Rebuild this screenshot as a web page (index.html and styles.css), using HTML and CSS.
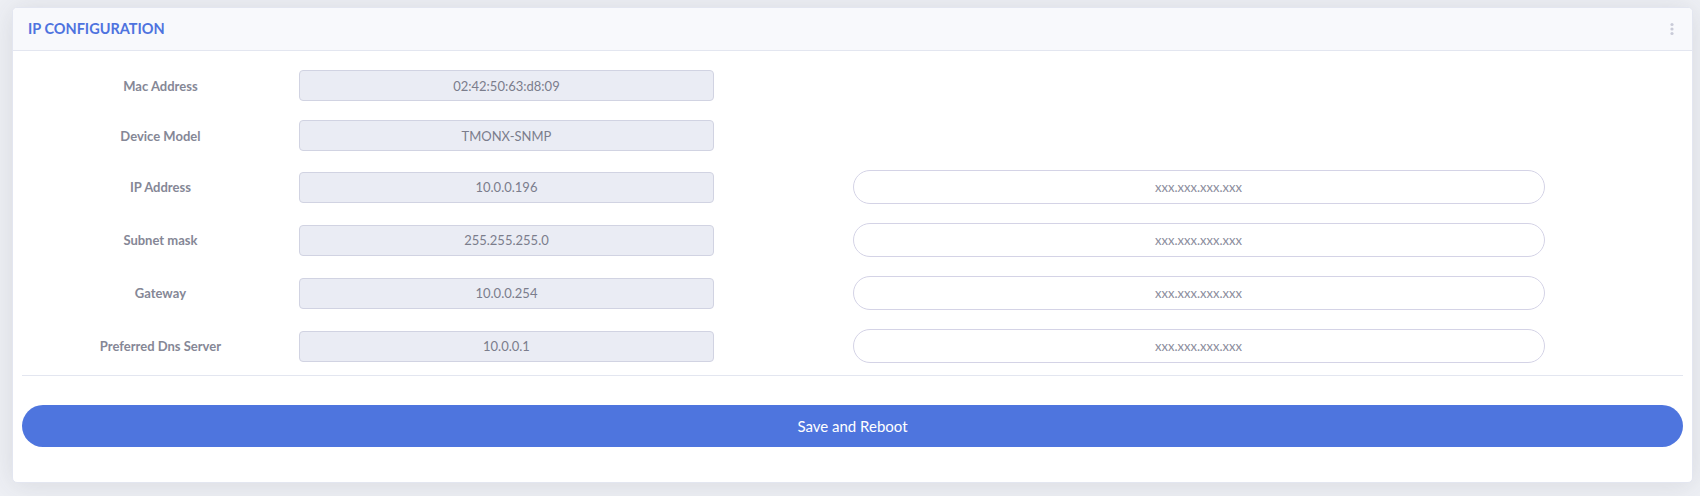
FILE: index.html
```html
<html>
    <head>
        <link rel="stylesheet" href="styles.css">
    </head>
    <body>
        <div class="card">
            <div class="card-header">
                <h6 class="card-title">IP CONFIGURATION</h6>
                <span class="kebab">
                    <svg width="6" height="14" viewBox="0 0 6 14">
                        <circle cx="3" cy="2.5" r="1.6" fill="#c9cbd8"></circle>
                        <circle cx="3" cy="7" r="1.6" fill="#c9cbd8"></circle>
                        <circle cx="3" cy="11.5" r="1.6" fill="#c9cbd8"></circle>
                    </svg>
                </span>
            </div>
            <div class="card-body">
                <form class="ip-form" onsubmit="return false">
                    <label class="field-label">Mac Address</label>
                    <input class="field-current" readonly value="02:42:50:63:d8:09">
                    <span></span><span></span><span></span>

                    <label class="field-label">Device Model</label>
                    <input class="field-current" readonly value="TMONX-SNMP">
                    <span></span><span></span><span></span>

                    <label class="field-label">IP Address</label>
                    <input class="field-current" readonly value="10.0.0.196">
                    <span></span>
                    <input class="field-new" id="new-ip" placeholder="xxx.xxx.xxx.xxx">
                    <span></span>

                    <label class="field-label">Subnet mask</label>
                    <input class="field-current" readonly value="255.255.255.0">
                    <span></span>
                    <input class="field-new" id="new-mask" placeholder="xxx.xxx.xxx.xxx">
                    <span></span>

                    <label class="field-label">Gateway</label>
                    <input class="field-current" readonly value="10.0.0.254">
                    <span></span>
                    <input class="field-new" id="new-gateway" placeholder="xxx.xxx.xxx.xxx">
                    <span></span>

                    <label class="field-label">Preferred Dns Server</label>
                    <input class="field-current" readonly value="10.0.0.1">
                    <span></span>
                    <input class="field-new" id="new-dns" placeholder="xxx.xxx.xxx.xxx">
                    <span></span>
                </form>
                <hr class="divider">
                <button class="btn-save">Save and Reboot</button>
            </div>
        </div>
    </body>
</html>
```

FILE: styles.css
```css
body {
    margin: 0;
    padding: 7px 7px 0 12px;
    background-color: #eef0f5;
    font-family: Lato, "Open Sans", sans-serif;
}

.card {
    background-color: #fff;
    border: 1px solid #e3e6f0;
    border-radius: 5px;
    box-shadow: 0 2px 28px 0 rgba(58, 59, 69, 0.12);
    overflow: hidden;
}

.card-header {
    display: flex;
    align-items: center;
    justify-content: space-between;
    height: 42px;
    padding: 0 20px 0 15px;
    background-color: #f8f9fc;
    border-bottom: 1px solid #e3e6f0;
}

.card-title {
    margin: 0 0 2px 0;
    font-size: 14.5px;
    font-weight: 700;
    color: #4e73df;
}

.kebab {
    display: flex;
    margin-right: -3px;
}

.card-body {
    padding: 19px 9px 35px 9px;
}

.ip-form {
    display: grid;
    grid-template-columns: 2fr 3fr 1fr 5fr 1fr;
    row-gap: 19px;
    align-items: center;
    margin: 0;
}

.field-label {
    text-align: center;
    font-size: 13px;
    font-weight: 700;
    color: #858796;
}

.field-current, .field-new {
    box-sizing: border-box;
    width: 100%;
    font-family: inherit;
    text-align: center;
    outline: none;
}

.field-current {
    height: 31px;
    background-color: #eaecf4;
    border: 1px solid #d1d3e2;
    border-radius: 4px;
    font-size: 13px;
    color: #7b7d8c;
}

.field-new {
    height: 34px;
    background-color: #fff;
    border: 1px solid #d4d3e6;
    border-radius: 17px;
    font-size: 13px;
}

.field-new::placeholder {
    color: #8a8c9c;
}

.divider {
    margin: 12px 0 29px 0;
    border: 0;
    border-top: 1px solid #e3e6f0;
}

.btn-save {
    display: block;
    width: 100%;
    height: 42px;
    background-color: #4e75de;
    color: #fff;
    border: none;
    border-radius: 21px;
    font-family: inherit;
    font-size: 15px;
    cursor: pointer;
}
```
